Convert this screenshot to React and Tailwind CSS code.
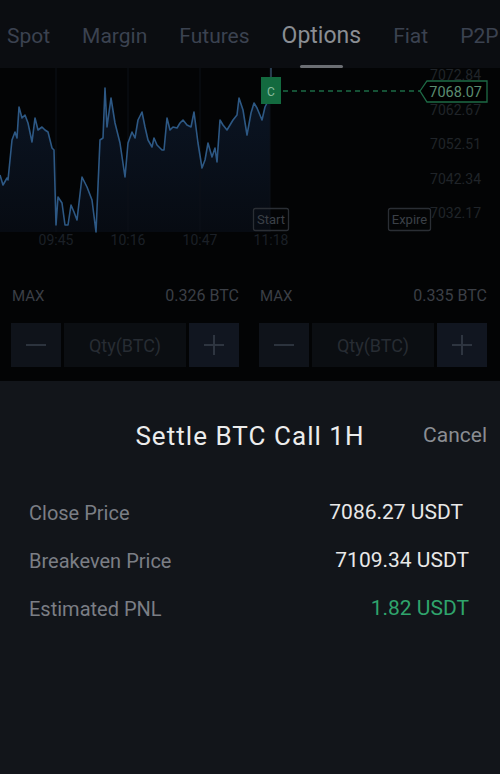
import React from "react";

const tabs = ["Spot", "Margin", "Futures", "Options", "Fiat", "P2P"];

const pts = [
    [0, 175], [3, 185], [7, 178], [8, 180], [12, 140], [15, 132], [17, 138], [19, 107],
    [22, 118], [25, 115], [28, 123], [32, 142], [35, 118], [38, 130], [42, 127], [45, 130],
    [48, 132], [52, 148], [54, 150], [56, 225], [58, 197], [62, 203], [65, 225], [68, 225],
    [71, 205], [74, 212], [77, 220], [82, 177], [87, 187], [92, 200], [96, 232], [100, 140],
    [103, 138], [105, 88], [107, 127], [111, 98], [115, 123], [120, 143], [125, 177], [128, 143],
    [132, 132], [135, 138], [138, 120], [142, 112], [145, 127], [148, 140], [152, 147], [154, 138],
    [157, 145], [162, 150], [164, 150], [167, 118], [170, 130], [173, 127], [177, 128], [180, 123],
    [183, 120], [187, 125], [191, 127], [194, 112], [198, 143], [202, 168], [205, 160], [208, 143],
    [212, 157], [215, 148], [217, 162], [220, 120], [223, 125], [227, 130], [230, 125], [233, 120],
    [237, 115], [239, 98], [243, 110], [247, 135], [251, 113], [254, 103], [257, 108], [262, 120],
    [265, 107], [267, 103], [270, 100],
];

const linePath = pts.map((p, i) => (i === 0 ? "M" : "L") + p[0] + " " + p[1]).join(" ");
const areaPath = linePath + " L270 232 L0 232 Z";

const axis = [
    ["7072.84", 75],
    ["7062.67", 110],
    ["7052.51", 144],
    ["7042.34", 179],
    ["7032.17", 213],
];

const times = [["09:45", 56], ["10:16", 128], ["10:47", 200], ["11:18", 271]];

function Chart() {
    return (
        <svg width="500" height="184" viewBox="0 68 500 184" className="block">
            <defs>
                <linearGradient id="fill" x1="0" y1="0" x2="0" y2="1">
                    <stop offset="0%" stopColor="#0b1524" />
                    <stop offset="100%" stopColor="#070b12" />
                </linearGradient>
            </defs>
            <path d={areaPath} fill="url(#fill)" />
            {[56, 128, 200, 270].map(x => (
                <line key={x} x1={x} y1="68" x2={x} y2="232" stroke="#0d1118" strokeWidth="1" />
            ))}
            <path d={linePath} fill="none" stroke="#2d5884" strokeWidth="1.6" strokeLinejoin="round" />

            {axis.map(([v, y]) => (
                <text key={v} x="481" y={y + 5} textAnchor="end" fontSize="14" fill="#202429"
                    fontFamily="Roboto, sans-serif">{v}</text>
            ))}

            {times.map(([t, x]) => (
                <text key={t} x={x} y="245" textAnchor="middle" fontSize="14" fill="#1b2027"
                    fontFamily="Roboto, sans-serif">{t}</text>
            ))}

            <line x1="271" y1="68" x2="271" y2="78" stroke="#4b6f92" strokeWidth="1" />
            <line x1="283" y1="91" x2="420" y2="91" stroke="#1d6b45" strokeWidth="1.5" strokeDasharray="5 4" />
            <rect x="261" y="77" width="20" height="27" fill="#136a3f" />
            <text x="271" y="95.5" textAnchor="middle" fontSize="12" fill="#86bb9d"
                fontFamily="Roboto, sans-serif">C</text>

            <path d="M420 91 L427 81 L487 81 L487 102 L427 102 Z" fill="#000" stroke="#1e6b46" strokeWidth="1.3" />
            <text x="482" y="97" textAnchor="end" fontSize="14.5" fill="#5a8c70"
                fontFamily="Roboto, sans-serif">7068.07</text>

            <rect x="253.5" y="208.5" width="35" height="22" rx="2" fill="none" stroke="#2a2e34" strokeWidth="1.3" />
            <text x="271" y="224" textAnchor="middle" fontSize="13" fill="#3b4047"
                fontFamily="Roboto, sans-serif">Start</text>
            <rect x="388.5" y="208.5" width="42" height="22" rx="2" fill="none" stroke="#2a2e34" strokeWidth="1.3" />
            <text x="409.5" y="224" textAnchor="middle" fontSize="13" fill="#3b4047"
                fontFamily="Roboto, sans-serif">Expire</text>
        </svg>
    );
}

function QtyBox({ max }) {
    return (
        <div className="flex flex-col">
            <div className="flex justify-between items-center h-[20px] text-[15px] text-[#3b3f46]">
                <span className="pl-[1px]">MAX</span>
                <span className="text-[16px]">{max}</span>
            </div>
            <div className="flex gap-[3px] h-[44px] mt-[17px]">
                <div className="w-[50px] bg-[#0f131a] flex items-center justify-center">
                    <div className="w-[20px] h-[2px] bg-[#2c333d]" />
                </div>
                <div className="flex-1 bg-[#0b0e12] flex items-center justify-center text-[18px] text-[#272c33]">
                    Qty(BTC)
                </div>
                <div className="w-[50px] bg-[#111620] flex items-center justify-center">
                    <svg width="20" height="20" viewBox="0 0 20 20">
                        <path d="M0 10 H20 M10 0 V20" stroke="#2e3540" strokeWidth="2" />
                    </svg>
                </div>
            </div>
        </div>
    );
}

function Row({ label, value, green, extraPad }) {
    return (
        <div className="flex items-center justify-between h-[48px]">
            <span className="text-[20px] text-[#7b7e85]">{label}</span>
            <span className={`text-[21px] ${green ? "text-[#2fa46c]" : "text-[#e8e8e8]"} ${extraPad ? "pr-[6px]" : ""}`}>
                {value}
            </span>
        </div>
    );
}

export default function App() {
    return (
        <div className="w-[500px] h-[774px] bg-[#030405] overflow-hidden flex flex-col font-['Roboto',sans-serif]">
            <div className="h-[68px] bg-[#0b0d11] flex flex-col">
                <div className="flex items-center gap-[32px] pl-[7px] h-[64px] pt-[9px] whitespace-nowrap">
                    {tabs.map(t => (
                        <span key={t} className={t === "Options" ? "text-[23px] text-[#8a8d93]" : "text-[21px] text-[#3b4250]"}>
                            {t}
                        </span>
                    ))}
                </div>
                <div className="ml-[300px] mt-[1px] w-[43px] h-[3px] rounded-full bg-[#6b6e73]" />
            </div>

            <Chart />

            <div className="grid grid-cols-2 gap-x-[20px] pl-[11px] pr-[13px] mt-[34px]">
                <QtyBox max="0.326 BTC" />
                <QtyBox max="0.335 BTC" />
            </div>

            <div className="mt-[14px] flex-1 bg-[#12151a] flex flex-col">
                <div className="grid grid-cols-[1fr_auto_1fr] items-center pt-[39px]">
                    <div />
                    <span className="text-[26px] tracking-[0.04em] text-[#ececec] leading-[30px]">Settle BTC Call 1H</span>
                    <span className="justify-self-end mr-[13px] text-[21px] text-[#8a8d92]">Cancel</span>
                </div>
                <div className="flex flex-col pl-[29px] pr-[31px] mt-[37px]">
                    <Row label="Close Price" value="7086.27 USDT" extraPad />
                    <Row label="Breakeven Price" value="7109.34 USDT" />
                    <Row label="Estimated PNL" value="1.82 USDT" green />
                </div>
            </div>
        </div>
    );
}
